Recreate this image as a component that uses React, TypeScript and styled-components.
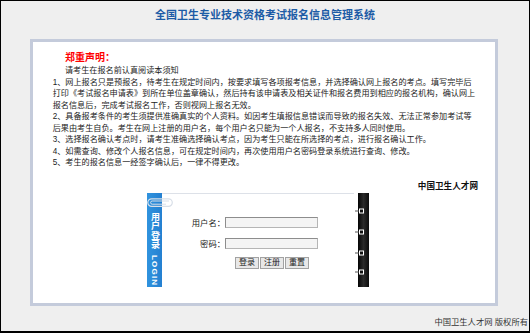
import styled, { createGlobalStyle } from "styled-components";

const GlobalStyle = createGlobalStyle`
  html, body {
    margin: 0;
    padding: 0;
    background: #fff;
  }
  body {
    font-family: "Liberation Sans", "Noto Sans CJK SC", sans-serif;
  }
`;

const Frame = styled.div`
  width: 530px;
  height: 333px;
  box-sizing: border-box;
  border: 1px solid #000;
  border-bottom-width: 2px;
  background: #efefef;
  display: flex;
  flex-direction: column;
`;

const Title = styled.h1`
  margin: 0;
  height: 28px;
  line-height: 28px;
  text-align: center;
  font-size: 11px;
  font-weight: bold;
  color: #1d5ca6;
`;

const Panel = styled.div`
  margin: 10px 0 0 29px;
  width: 468px;
  height: 267px;
  box-sizing: border-box;
  border: 3px solid #c4cbdb;
  background: #fff;
  padding: 9.5px 17px 0 19.7px;
  color: #222;
`;

const Heading = styled.div`
  margin-left: 12.3px;
  font-size: 10px;
  line-height: 12px;
  font-weight: bold;
  color: #f00;
`;

const Intro = styled.div`
  margin-left: 12.3px;
  font-size: 8.15px;
  line-height: 13px;
`;

const Item = styled.p`
  margin: 0;
  font-size: 8.15px;
  line-height: 11.5px;
`;

const Signature = styled.div`
  margin-top: 11.7px;
  text-align: right;
  font-size: 8.6px;
  line-height: 12px;
  font-weight: bold;
  color: #111;
`;

const LoginBox = styled.div`
  display: flex;
  width: 222px;
  height: 94px;
  margin: 1.3px 0 0 94.3px;
`;

const SideTab = styled.div`
  position: relative;
  width: 15px;
  flex: none;
  background: linear-gradient(to right, #3093de, #2480d1);
  display: flex;
  flex-direction: column;
  align-items: center;
  padding-top: 19px;
  box-sizing: border-box;
  overflow: visible;
`;

const Clip = styled.svg`
  position: absolute;
  left: 0;
  top: 5px;
`;

const TabText = styled.span<{ $latin?: boolean }>`
  writing-mode: vertical-rl;
  color: #fff;
  font-weight: bold;
  font-size: ${(p) => (p.$latin ? "8px" : "9px")};
  line-height: 15px;
  letter-spacing: ${(p) => (p.$latin ? "1.2px" : "0.3px")};
  margin-top: ${(p) => (p.$latin ? "5px" : "0")};
  white-space: nowrap;
`;

const FormArea = styled.div`
  flex: 1;
  border-top: 1px solid #dde1e8;
  background: #fff;
  padding-top: 22px;
  display: flex;
  flex-direction: column;
  gap: 9px;
`;

const Row = styled.div`
  display: flex;
  align-items: center;
  height: 12px;
`;

const Label = styled.label`
  width: 63px;
  text-align: right;
  font-size: 8.3px;
  color: #222;
`;

const Input = styled.input`
  width: 93px;
  height: 11px;
  box-sizing: border-box;
  margin: 0;
  padding: 0;
  border: 1px solid #8d8d8d;
  border-right-color: #b5b5b5;
  border-bottom-color: #b5b5b5;
  background: #f4f4f4;
`;

const Buttons = styled.div`
  display: flex;
  gap: 1px;
  padding-left: 73px;
  margin-top: -1px;
`;

const Button = styled.button`
  width: 24px;
  height: 12px;
  margin: 0;
  padding: 0;
  border: 1px solid #a2a2a2;
  background: #e8e8e8;
  font-family: inherit;
  font-size: 8px;
  line-height: 10px;
  color: #222;
`;

const Footer = styled.div`
  margin-top: 10px;
  padding-right: 1px;
  text-align: right;
  font-size: 8.3px;
  line-height: 12px;
  color: #333;
`;

const rules = [
  "1、网上报名只是预报名，待考生在规定时间内，按要求填写各项报考信息，并选择确认网上报名的考点。填写完毕后打印《考试报名申请表》到所在单位盖章确认，然后持有该申请表及相关证件和报名费用到相应的报名机构，确认网上报名信息后，完成考试报名工作，否则视网上报名无效。",
  "2、具备报考条件的考生须提供准确真实的个人资料。如因考生填报信息错误而导致的报名失效、无法正常参加考试等后果由考生自负。考生在网上注册的用户名，每个用户名只能为一个人报名，不支持多人同时使用。",
  "3、选择报名确认考点时，请考生准确选择确认考点，因为考生只能在所选择的考点，进行报名确认工作。",
  "4、如需查询、修改个人报名信息，可在规定时间内，再次使用用户名密码登录系统进行查询、修改。",
  "5、考生的报名信息一经签字确认后，一律不得更改。",
];

const rings = [18, 39, 60, 79];

function Binder() {
  return (
    <svg width="15" height="94" viewBox="0 0 15 94">
      <defs>
        <linearGradient id="bar" x1="0" x2="1" y1="0" y2="0">
          <stop offset="0" stopColor="#050505" />
          <stop offset="0.5" stopColor="#2a2a2a" />
          <stop offset="1" stopColor="#0c0c0c" />
        </linearGradient>
      </defs>
      <rect x="4" y="0" width="11" height="94" fill="url(#bar)" />
      {rings.map((y) => (
        <g key={y}>
          <line x1="1" y1={y} x2="5.5" y2={y} stroke="#555" strokeWidth="1" />
          <rect x="5.5" y={y - 2} width="4" height="4" fill="#111" stroke="#fff" strokeWidth="1" />
        </g>
      ))}
    </svg>
  );
}

export default function App() {
  return (
    <>
      <GlobalStyle />
      <Frame>
        <Title>全国卫生专业技术资格考试报名信息管理系统</Title>
        <Panel>
          <Heading>郑重声明：</Heading>
          <Intro>请考生在报名前认真阅读本须知</Intro>
          {rules.map((r) => (
            <Item key={r}>{r}</Item>
          ))}
          <Signature>中国卫生人才网</Signature>
          <LoginBox>
            <SideTab>
              <Clip width="27" height="10" viewBox="0 0 27 10">
                <rect x="0.8" y="0.8" width="24.5" height="7.6" rx="3.8" fill="none" stroke="#d8dfe8" strokeWidth="1.2" />
                <path d="M22 3 H5.2 a1.6 1.6 0 0 0 0 3.2 H19" fill="none" stroke="#d8dfe8" strokeWidth="1" />
              </Clip>
              <TabText>用户登录</TabText>
              <TabText $latin>LOGIN</TabText>
            </SideTab>
            <FormArea>
              <Row>
                <Label>用户名：</Label>
                <Input type="text" />
              </Row>
              <Row>
                <Label>密码：</Label>
                <Input type="password" />
              </Row>
              <Buttons>
                <Button>登录</Button>
                <Button>注册</Button>
                <Button>重置</Button>
              </Buttons>
            </FormArea>
            <Binder />
          </LoginBox>
        </Panel>
        <Footer>中国卫生人才网&nbsp;版权所有</Footer>
      </Frame>
    </>
  );
}
